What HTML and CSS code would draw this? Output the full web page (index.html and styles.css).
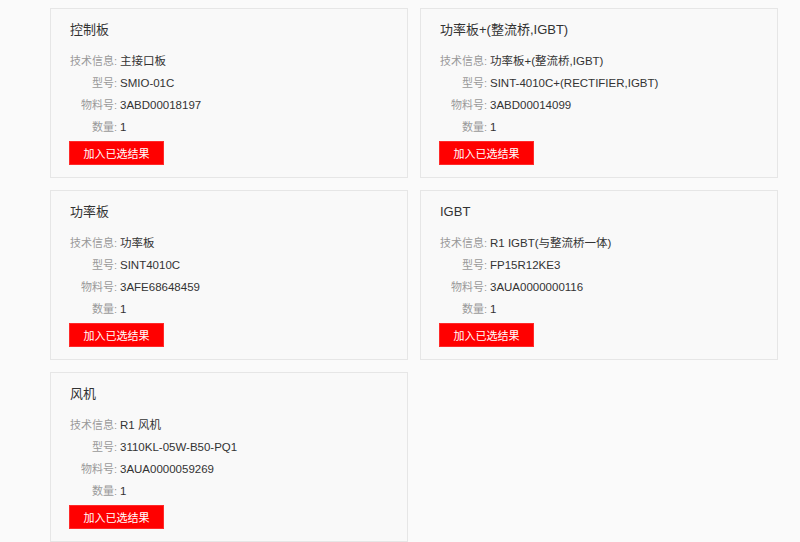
FILE: index.html
```html
<!DOCTYPE html>
<html lang="zh-CN">
<head>
    <meta charset="utf-8">
    <title>配件列表</title>

    <link rel="stylesheet" href="styles.css">
</head>
<body>

    <div class="part-list">

      <div class="part-card">
        <p class="part-title">控制板</p>
        <div class="part-info">
          <span class="info-label">技术信息:</span><span class="info-value">主接口板</span>
          <span class="info-label">型号:</span><span class="info-value">SMIO-01C</span>
          <span class="info-label">物料号:</span><span class="info-value">3ABD00018197</span>
          <span class="info-label">数量:</span><span class="info-value">1</span>
        </div>
        <button class="add-button">加入已选结果</button>
      </div>

      <div class="part-card">
        <p class="part-title">功率板+(整流桥,IGBT)</p>
        <div class="part-info">
          <span class="info-label">技术信息:</span><span class="info-value">功率板+(整流桥,IGBT)</span>
          <span class="info-label">型号:</span><span class="info-value">SINT-4010C+(RECTIFIER,IGBT)</span>
          <span class="info-label">物料号:</span><span class="info-value">3ABD00014099</span>
          <span class="info-label">数量:</span><span class="info-value">1</span>
        </div>
        <button class="add-button">加入已选结果</button>
      </div>

      <div class="part-card">
        <p class="part-title">功率板</p>
        <div class="part-info">
          <span class="info-label">技术信息:</span><span class="info-value">功率板</span>
          <span class="info-label">型号:</span><span class="info-value">SINT4010C</span>
          <span class="info-label">物料号:</span><span class="info-value">3AFE68648459</span>
          <span class="info-label">数量:</span><span class="info-value">1</span>
        </div>
        <button class="add-button">加入已选结果</button>
      </div>

      <div class="part-card">
        <p class="part-title">IGBT</p>
        <div class="part-info">
          <span class="info-label">技术信息:</span><span class="info-value">R1 IGBT(与整流桥一体)</span>
          <span class="info-label">型号:</span><span class="info-value">FP15R12KE3</span>
          <span class="info-label">物料号:</span><span class="info-value">3AUA0000000116</span>
          <span class="info-label">数量:</span><span class="info-value">1</span>
        </div>
        <button class="add-button">加入已选结果</button>
      </div>

      <div class="part-card">
        <p class="part-title">风机</p>
        <div class="part-info">
          <span class="info-label">技术信息:</span><span class="info-value">R1 风机</span>
          <span class="info-label">型号:</span><span class="info-value">3110KL-05W-B50-PQ1</span>
          <span class="info-label">物料号:</span><span class="info-value">3AUA0000059269</span>
          <span class="info-label">数量:</span><span class="info-value">1</span>
        </div>
        <button class="add-button">加入已选结果</button>
      </div>

    </div>

</body>
</html>
```

FILE: styles.css
```css
body {
  margin: 0;
  background-color: #fafafa;
  color: #333;
  font-family: "Liberation Sans", "Noto Sans CJK SC", sans-serif;
}

.part-list {
  display: grid;
  grid-template-columns: 358px 358px;
  gap: 12px;
  padding: 8px 0 0 50px;
}

.part-card {
  height: 170px;
  box-sizing: border-box;
  background-color: #f9f9f9;
  border: 1px solid #e6e6e6;
  padding: 11px 18px 12px 18px;
}

.part-title {
  margin: 0 0 10px 1px;
  font-size: 13px;
  line-height: 20px;
}

.part-info {
  display: grid;
  grid-template-columns: 48px 1fr;
  column-gap: 3px;
  font-size: 11.5px;
  line-height: 22px;
}

.info-label {
  color: #999;
  font-size: 11px;
  text-align: right;
  white-space: nowrap;
}

.info-value {
  color: #333;
  white-space: nowrap;
}

.add-button {
  margin-top: 3px;
  width: 95px;
  height: 24px;
  padding: 0;
  background-color: #ff0000;
  border: 1px solid #ff2a2a;
  color: white;
  font-family: inherit;
  font-size: 11px;
  cursor: pointer;
}
```
